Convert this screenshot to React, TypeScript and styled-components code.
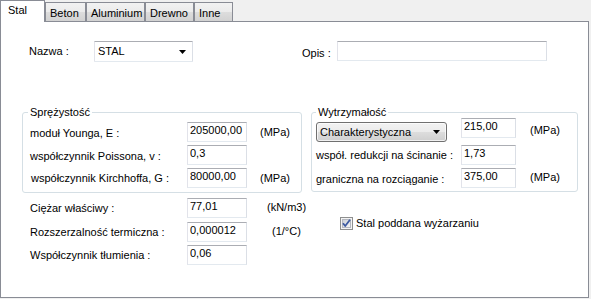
import React from 'react';
import styled, { createGlobalStyle } from 'styled-components';

const Global = createGlobalStyle`
  html, body { margin: 0; padding: 0; background: #f0f0f0; }
  body { font-family: "Liberation Sans", Arial, sans-serif; font-size: 11px; line-height: 13px; color: #000; }
`;

const FONT = `11px/13px "Liberation Sans", Arial, sans-serif`;

const Window = styled.div`
  width: 591px;
  height: 299px;
  background: #f0f0f0;
  display: flex;
  flex-direction: column;
  overflow: hidden;
`;

const TabStrip = styled.div`
  display: flex;
  align-items: flex-end;
  height: 21px;
  position: relative;
  z-index: 1;
`;

const Tab = styled.div<{ $active?: boolean; $w: number }>`
  box-sizing: border-box;
  width: ${p => p.$w}px;
  height: ${p => (p.$active ? 22 : 19)}px;
  margin-bottom: ${p => (p.$active ? -1 : 0)}px;
  border: 1px solid #898c95;
  border-bottom: none;
  background: ${p =>
    p.$active ? '#ffffff' : 'linear-gradient(#f2f2f2 0%, #ebebeb 50%, #dddddd 51%, #d2d2d2 100%)'};
  padding: ${p => (p.$active ? '3px 0 0 7px' : '4px 0 0 4px')};
  white-space: nowrap;
`;

const Panel = styled.div`
  box-sizing: border-box;
  width: 589px;
  height: 277px;
  border: 1px solid #898c95;
  background: #ffffff;
  display: flex;
  flex-direction: column;
`;

const TopRow = styled.div`
  display: flex;
  align-items: flex-start;
  margin: 19px 0 0 28px;
  height: 21px;
`;

const Label = styled.div<{ $w?: number; $dy?: number; $indent?: number }>`
  ${p => (p.$w ? `width: ${p.$w}px; flex: none;` : '')}
  padding-top: ${p => Math.max(0, (p.$dy ?? 0) * 2)}px;
  padding-bottom: ${p => Math.max(0, -(p.$dy ?? 0) * 2)}px;
  margin-left: ${p => p.$indent ?? 0}px;
  white-space: nowrap;
`;

const Spacer = styled.div<{ $w: number }>`
  width: ${p => p.$w}px;
  flex: none;
`;

const Field = styled.input<{ $w: number }>`
  box-sizing: border-box;
  width: ${p => p.$w}px;
  height: 20px;
  margin: 0;
  padding: 0 2px 4px 2px;
  border: 1px solid;
  border-color: #abadb3 #dbdfe6 #e3e9ef #e2e3ea;
  background: #fff;
  font: ${FONT};
  color: #000;
  outline: none;
`;

const Combo = styled.div<{ $w: number; $h: number; $button?: boolean }>`
  box-sizing: border-box;
  width: ${p => p.$w}px;
  height: ${p => p.$h}px;
  display: flex;
  align-items: center;
  justify-content: space-between;
  padding: 0 6px 0 3px;
  border: 1px solid;
  border-radius: ${p => (p.$button ? 3 : 1)}px;
  border-color: ${p => (p.$button ? '#707070' : '#abadb3 #dbdfe6 #e3e9ef #e2e3ea')};
  background: ${p =>
    p.$button ? 'linear-gradient(#f2f2f2 0%, #ebebeb 50%, #dddddd 51%, #cfcfcf 100%)' : '#ffffff'};
  box-shadow: ${p => (p.$button ? 'inset 0 0 0 1px rgba(255,255,255,0.7)' : 'none')};
`;

const Arrow = () => (
  <svg width="7" height="4" viewBox="0 0 7 4">
    <path d="M0 0h7L3.5 4z" fill="#000" />
  </svg>
);

const GroupsRow = styled.div`
  display: flex;
  align-items: flex-start;
  margin: 44px 0 0 21px;
`;

const Group = styled.fieldset<{ $w: number; $ml?: number }>`
  box-sizing: border-box;
  width: ${p => p.$w}px;
  margin: 0 0 0 ${p => p.$ml ?? 0}px;
  padding: 0;
  min-width: 0;
  border: 1px solid #d5dfe5;
  border-radius: 3px;
`;

const Legend = styled.legend<{ $ml: number }>`
  margin-left: ${p => p.$ml}px;
  padding: 0 2px;
  line-height: 12px;
  height: 12px;
`;

const Grid = styled.div<{ $cols: string; $rows: string; $pad: string; $cgap: number }>`
  display: grid;
  grid-template-columns: ${p => p.$cols};
  grid-template-rows: ${p => p.$rows};
  column-gap: ${p => p.$cgap}px;
  row-gap: 3px;
  padding: ${p => p.$pad};
  align-items: center;
`;

const Cell = styled.div<{ $align?: string }>`
  align-self: ${p => p.$align ?? 'center'};
  display: flex;
`;

const BottomRow = styled.div`
  display: flex;
  align-items: flex-start;
  margin: 5px 0 0 29px;
`;

const BottomGrid = styled.div`
  width: 310px;
  display: grid;
  grid-template-columns: 157px 60px auto;
  grid-template-rows: 21px 20px 20px;
  row-gap: 3px;
  align-items: center;
`;

const Unit = styled.div<{ $ml?: number; $dy?: number }>`
  margin-left: ${p => p.$ml ?? 0}px;
  padding-top: ${p => Math.max(0, (p.$dy ?? 0) * 2)}px;
  padding-bottom: ${p => Math.max(0, -(p.$dy ?? 0) * 2)}px;
  white-space: nowrap;
`;

const CheckRow = styled.label`
  display: flex;
  align-items: center;
  gap: 3px;
  margin-top: 19px;
`;

const CheckBox = () => (
  <svg width="13" height="13" viewBox="0 0 13 13">
    <defs>
      <linearGradient id="cbg" x1="0" y1="0" x2="1" y2="1">
        <stop offset="0" stopColor="#cbcfd5" />
        <stop offset="1" stopColor="#f6f6f6" />
      </linearGradient>
    </defs>
    <rect x="0.5" y="0.5" width="12" height="12" fill="#f4f4f4" stroke="#8e8f8f" />
    <rect x="2.5" y="2.5" width="8" height="8" fill="url(#cbg)" stroke="#b5b8c0" />
    <path d="M3 6.2 L5.2 9 L10 2.8" fill="none" stroke="#3d5aa1" strokeWidth="1.8" strokeLinejoin="round" />
  </svg>
);

export default function App() {
  return (
    <Window>
      <Global />
      <TabStrip>
        <Tab $active $w={45}>Stal</Tab>
        <Tab $w={41}>Beton</Tab>
        <Tab $w={59}>Aluminium</Tab>
        <Tab $w={49}>Drewno</Tab>
        <Tab $w={39}>Inne</Tab>
      </TabStrip>
      <Panel>
        <TopRow>
          <Label $w={65} $dy={2.2}>Nazwa :</Label>
          <Combo $w={99} $h={21}>
            <span>STAL</span>
            <Arrow />
          </Combo>
          <Spacer $w={109} />
          <Label $w={35} $dy={3}>Opis :</Label>
          <Field $w={210} readOnly defaultValue="" />
        </TopRow>

        <GroupsRow>
          <Group $w={280}>
            <Legend $ml={5}>Sprężystość</Legend>
            <Grid $cols="144px 60px auto" $rows="20px 20px 20px" $pad="4px 0 4px 7px" $cgap={13}>
              <Label $dy={1.5}>moduł Younga, E :</Label>
              <Field $w={60} readOnly defaultValue="205000,00" />
              <Unit $dy={0.7}>(MPa)</Unit>
              <Label $dy={1.3}>współczynnik Poissona, v :</Label>
              <Field $w={60} readOnly defaultValue="0,3" />
              <span />
              <Label $indent={1}>współczynnik Kirchhoffa, G :</Label>
              <Field $w={60} readOnly defaultValue="80000,00" />
              <Unit>(MPa)</Unit>
            </Grid>
          </Group>
          <Group $w={267} $ml={9}>
            <Legend $ml={4}>Wytrzymałość</Legend>
            <Grid $cols="131px 55px auto" $rows="24px 20px 20px" $pad="0 0 3px 4px" $cgap={14}>
              <Cell $align="end">
                <Combo $w={138} $h={20} $button>
                  <span>Charakterystyczna</span>
                  <Arrow />
                </Combo>
              </Cell>
              <Cell $align="start">
                <Field $w={55} readOnly defaultValue="215,00" />
              </Cell>
              <Unit>(MPa)</Unit>
              <Label>współ. redukcji na ścinanie :</Label>
              <Field $w={55} readOnly defaultValue="1,73" />
              <span />
              <Label $dy={1}>graniczna na rozciąganie :</Label>
              <Field $w={55} readOnly defaultValue="375,00" />
              <Unit $dy={-1}>(MPa)</Unit>
            </Grid>
          </Group>
        </GroupsRow>

        <BottomRow>
          <BottomGrid>
            <Label>Ciężar właściwy :</Label>
            <Cell $align="start">
              <Field $w={60} readOnly defaultValue="77,01" />
            </Cell>
            <Unit $ml={20} $dy={-1}>(kN/m3)</Unit>
            <Label>Rozszerzalność termiczna :</Label>
            <Field $w={60} readOnly defaultValue="0,000012" />
            <Unit $ml={25} $dy={-1}>(1/°C)</Unit>
            <Label>Współczynnik tłumienia :</Label>
            <Field $w={60} readOnly defaultValue="0,06" />
            <span />
          </BottomGrid>
          <CheckRow>
            <CheckBox />
            <span>Stal poddana wyżarzaniu</span>
          </CheckRow>
        </BottomRow>
      </Panel>
    </Window>
  );
}
